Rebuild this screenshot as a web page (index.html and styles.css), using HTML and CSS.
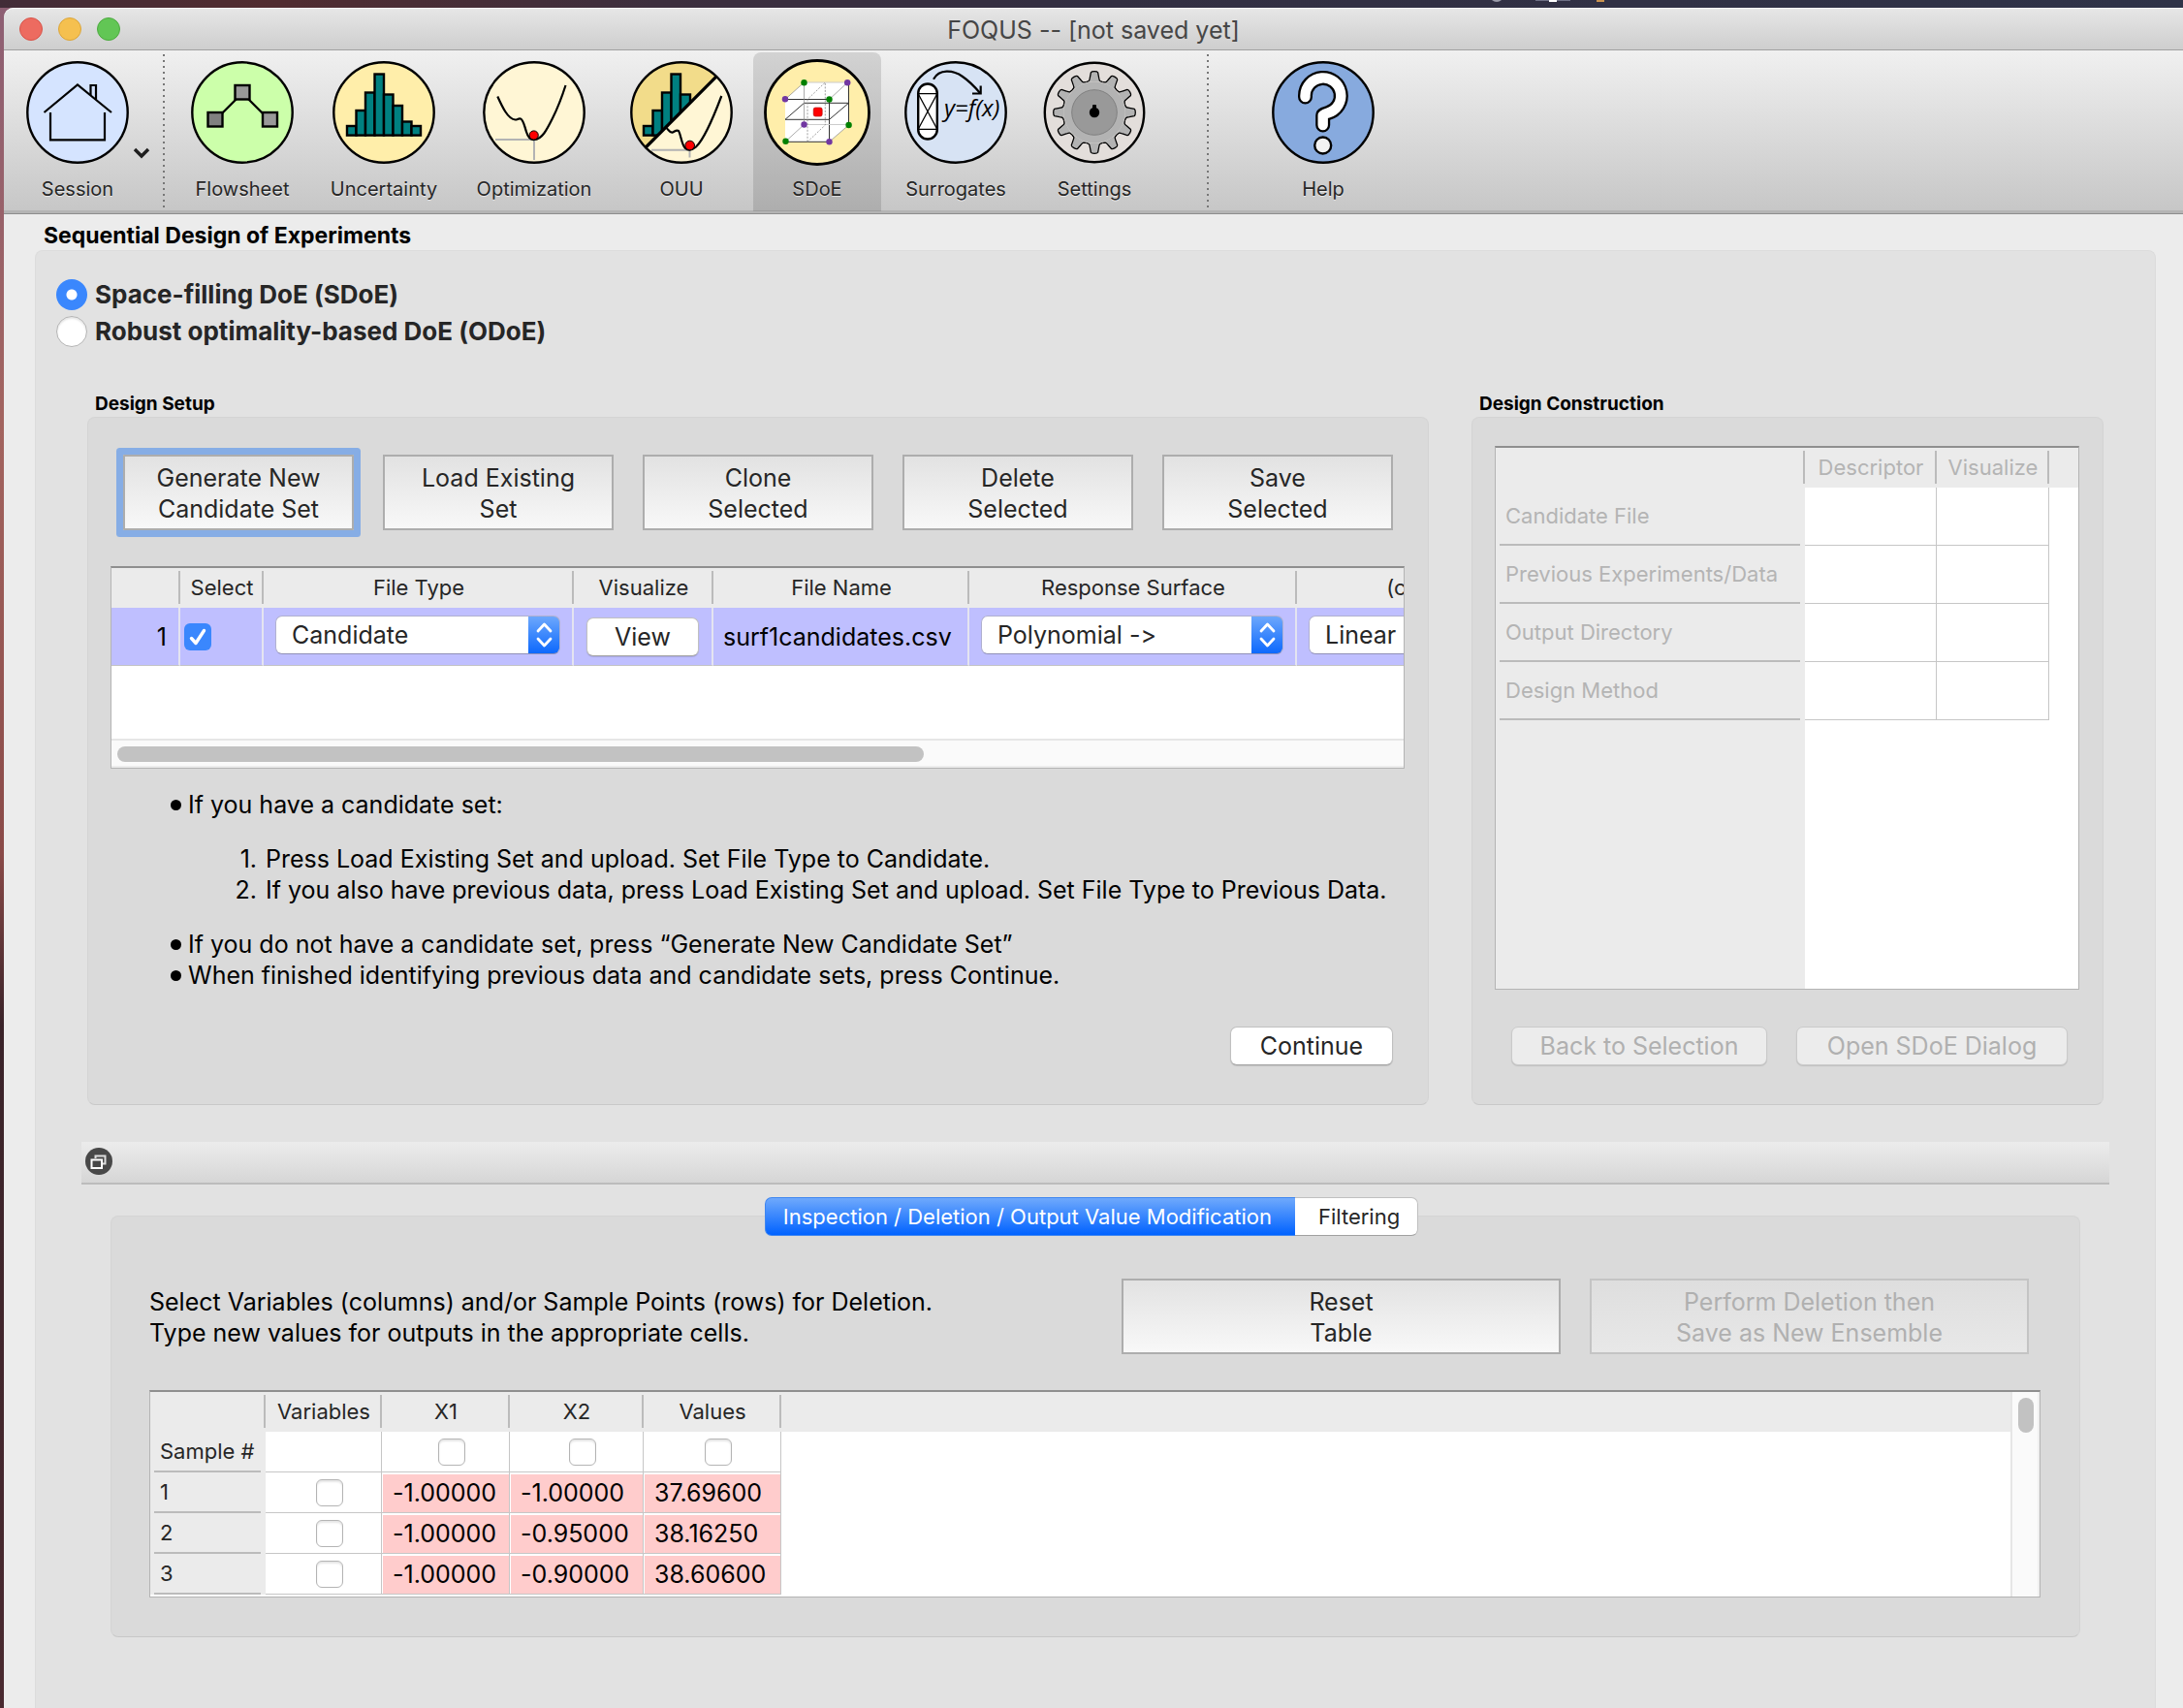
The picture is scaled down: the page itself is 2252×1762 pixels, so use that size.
FILE: index.html
```html
<!DOCTYPE html>
<html lang="en">
<head>
<meta charset="utf-8">
<title>FOQUS -- [not saved yet]</title>
<link rel="stylesheet" href="styles.css">
</head>
<body>
<div class="desktop-strip"></div>
<div class="window">
  <header class="titlebar">
    <div class="lights"><span class="light light-close"></span><span class="light light-min"></span><span class="light light-zoom"></span></div>
    <h1 class="window-title">FOQUS -- [not saved yet]</h1>
  </header>

  <nav class="toolbar" aria-label="Main">
    <button class="tool tool-session" type="button">
      <svg class="tool-icon" viewBox="0 0 106 106"><circle cx="53" cy="53" r="51.7" fill="#d5e4ff" stroke="#000" stroke-width="2.4"/><g fill="none" stroke="#000" stroke-width="2.2"><path d="M25 53V81.3H81V53"/><path d="M18.5 53L53 24.5L88 53"/><path d="M66.5 35V25H72V39.5"/></g></svg>
      <span class="tool-label">Session</span>
      <svg class="tool-arrow" viewBox="0 0 18 12"><path d="M2 2L9 9L16 2" fill="none" stroke="#1e1e1e" stroke-width="3.4"/></svg>
    </button>
    <span class="tool-sep"></span>
    <button class="tool tool-md" type="button">
      <svg class="tool-icon" viewBox="0 0 106 106"><circle cx="53" cy="53" r="51.7" fill="#ccffaa" stroke="#000" stroke-width="2.4"/><g stroke="#000" stroke-width="2.4"><path d="M47 39L32 54M59 39L74 54" fill="none"/><rect x="45.5" y="25" width="15" height="14.5" fill="#999"/><rect x="17.5" y="53" width="15" height="14.5" fill="#808080"/><rect x="74" y="53" width="15" height="14.5" fill="#999"/></g></svg>
      <span class="tool-label">Flowsheet</span>
    </button>
    <button class="tool tool-md" type="button">
      <svg class="tool-icon" viewBox="0 0 106 106"><circle cx="53" cy="53" r="51.7" fill="#ffeeaa" stroke="#000" stroke-width="2.4"/><g fill="#008080" stroke="#000" stroke-width="2.4"><rect x="15" y="67" width="9.5" height="9.6"/><rect x="24.5" y="51" width="9.5" height="25.6"/><rect x="34" y="32.5" width="9.5" height="44.1"/><rect x="43.5" y="13.5" width="9.5" height="63.1"/><rect x="53" y="34.5" width="9.5" height="42.1"/><rect x="62.5" y="46" width="9.5" height="30.6"/><rect x="72" y="62.5" width="9.5" height="14.1"/><rect x="81.5" y="67" width="9.5" height="9.6"/></g></svg>
      <span class="tool-label">Uncertainty</span>
    </button>
    <button class="tool tool-lg" type="button">
      <svg class="tool-icon" viewBox="0 0 106 106"><circle cx="53" cy="53" r="51.7" fill="#fff6d5" stroke="#000" stroke-width="2.4"/><path d="M13 81H53V102" fill="none" stroke="#b3b3b3" stroke-width="2"/><path d="M15.3 36.5C20 47 26 60 33.5 60.5C36 60.5 36.5 59 39 59.5C42 60.5 43 67 45 73C46.5 78 49 81.5 53 81C61 81 66 71 72 59C78 47 82 36 85.5 25" fill="none" stroke="#000" stroke-width="2.2"/><circle cx="52.7" cy="76.5" r="4.6" fill="#f00" stroke="#000" stroke-width="1"/></svg>
      <span class="tool-label">Optimization</span>
    </button>
    <button class="tool" type="button">
      <svg class="tool-icon" viewBox="0 0 106 106"><defs><clipPath id="upper-half"><path d="M0 0H104.7L0 105Z"/></clipPath></defs><circle cx="53" cy="53" r="51.7" fill="#fff6d5"/><g clip-path="url(#upper-half)"><circle cx="53" cy="53" r="51.7" fill="#f2dc8a"/><g fill="#008080" stroke="#000" stroke-width="2.4"><rect x="14" y="67" width="9.5" height="9.6"/><rect x="23.5" y="51" width="9.5" height="25.6"/><rect x="33" y="32.5" width="9.5" height="44.1"/><rect x="42.5" y="13.5" width="9.5" height="63.1"/><rect x="52" y="34.5" width="10" height="42.1"/></g></g><circle cx="53" cy="53" r="51.7" fill="none" stroke="#000" stroke-width="2.4"/><path d="M16.2 89L88.6 16.3" stroke="#000" stroke-width="3.2"/><path d="M22 91.8H61.5V99.5" fill="none" stroke="#b3b3b3" stroke-width="2"/><path d="M37.4 69C40 71 41 74.5 44 73.5C46 72.5 48 70.5 50 72C52.5 76 53 86 57 90C60 92.5 64 92 68 88.5C77 80 86 58 94.3 36" fill="none" stroke="#000" stroke-width="2.2"/><circle cx="61.7" cy="87" r="4.8" fill="#f00" stroke="#000" stroke-width="1"/></svg>
      <span class="tool-label">OUU</span>
    </button>
    <button class="tool tool-active" type="button" aria-pressed="true">
      <svg class="tool-icon" viewBox="0 0 110 110"><circle cx="55" cy="55" r="53.5" fill="#ffeeaa" stroke="#000" stroke-width="2.8"/><path d="M22 41.5L41.5 24H86.5L87.5 68L67.5 85.3H22Z" fill="#fff"/><g fill="none" stroke="#333" stroke-width="1"><path d="M22 41.5H67.5V85.3H22M87.5 24V68M22 62.3H67.5L87.5 45.3M22 62.3L41.5 45.3H87.5"/><path d="M22 41.5L41.5 24V67.5M67.5 41.5L86.5 24M67.5 85.3L87.5 68M22 85.3L41.5 67.5" stroke="#888" stroke-width=".7"/><path d="M41.5 67.5H87.5M41.5 24H86.5" stroke="#ccc"/><path d="M45 85.3V41.5L63.3 24V68L45 85.3" stroke="#888" stroke-width=".8" stroke-dasharray="2 1.5"/></g><rect x="51.2" y="50" width="9" height="9" rx="2" fill="#f00" stroke="#a00" stroke-width=".6"/><g fill="#008000"><circle cx="41.5" cy="24.3" r="3.2"/><circle cx="67.5" cy="41.5" r="3.2"/><circle cx="22.5" cy="84.7" r="3.2"/><circle cx="87.6" cy="68" r="3.2"/></g><g fill="#7137a1"><circle cx="86.2" cy="24.3" r="3.2"/><circle cx="22" cy="41.3" r="3.2"/><circle cx="41.5" cy="67.5" r="3.2"/><circle cx="67.5" cy="85.3" r="3.2"/></g></svg>
      <span class="tool-label">SDoE</span>
    </button>
    <button class="tool tool-md" type="button">
      <svg class="tool-icon" viewBox="0 0 106 106"><circle cx="53" cy="53" r="51.7" fill="#d7e3f4" stroke="#000" stroke-width="2.4"/><rect x="14.2" y="23.5" width="19.6" height="57" rx="9.8" fill="#fff" stroke="#000" stroke-width="2.4"/><path d="M14.2 33.7H33.8M14.2 70.3H33.8M14.2 33.7L33.8 70.3M33.8 33.7L14.2 70.3" stroke="#000" stroke-width="1.3"/><path d="M30 18.7C36 8 50 9 60 16C68 21.5 73 27 78 33" fill="none" stroke="#000" stroke-width="2.2"/><path d="M70 33.5H78.7V25.5" fill="none" stroke="#000" stroke-width="2.2"/><text class="icon-formula" x="41" y="57">y=f(x)</text></svg>
      <span class="tool-label">Surrogates</span>
    </button>
    <button class="tool" type="button">
      <svg class="tool-icon" viewBox="0 0 106 106"><defs><path id="tooth" d="M-8.4 -31.4L-5.8 -32.5Q-5 -33 -4.6 -36L-3.6 -41.2Q-3 -42.3 0 -42.3Q3 -42.3 3.6 -41.2L4.6 -36Q5 -33 5.8 -32.5L8.4 -31.4"/></defs><circle cx="53" cy="53" r="51.2" fill="#e3dedb" stroke="#000" stroke-width="2.4"/><g transform="translate(53 53)"><g fill="#b3b3b3" stroke="#000" stroke-width="1.3"><use href="#tooth"/><use href="#tooth" transform="rotate(30)"/><use href="#tooth" transform="rotate(60)"/><use href="#tooth" transform="rotate(90)"/><use href="#tooth" transform="rotate(120)"/><use href="#tooth" transform="rotate(150)"/><use href="#tooth" transform="rotate(180)"/><use href="#tooth" transform="rotate(210)"/><use href="#tooth" transform="rotate(240)"/><use href="#tooth" transform="rotate(270)"/><use href="#tooth" transform="rotate(300)"/><use href="#tooth" transform="rotate(330)"/></g><circle r="31.6" fill="#b3b3b3"/><circle r="23.3" fill="#999" stroke="#808080"/><circle r="5.2"/><rect x="-2" y="-8" width="4" height="5" rx="1"/></g></svg>
      <span class="tool-label">Settings</span>
    </button>
    <span class="tool-sep tool-sep-wide"></span>
    <button class="tool" type="button">
      <svg class="tool-icon" viewBox="0 0 106 106"><circle cx="53" cy="53" r="51.7" fill="#87aade" stroke="#000" stroke-width="2.4"/><g fill="none" stroke-linecap="round" stroke-linejoin="round"><path d="M34.5 37V35.5A18.4 18.4 0 1 1 58 53.5Q52.7 55 52.7 56V66" stroke="#000" stroke-width="15"/><path d="M34.5 37V35.5A18.4 18.4 0 1 1 58 53.5Q52.7 55 52.7 56V66" stroke="#fff" stroke-width="10.4"/></g><circle cx="52.7" cy="87" r="8.5" fill="#f2f2f2" stroke="#000" stroke-width="2.4"/></svg>
      <span class="tool-label">Help</span>
    </button>
  </nav>

  <main class="page">
    <h2 class="page-title">Sequential Design of Experiments</h2>
    <div class="page-panel">
      <div class="modes" role="radiogroup">
        <label class="mode"><input class="radio" type="radio" name="doe" checked>Space-filling DoE (SDoE)</label>
        <label class="mode"><input class="radio" type="radio" name="doe">Robust optimality-based DoE (ODoE)</label>
      </div>

      <div class="groups">
        <section class="group">
          <h3 class="group-title">Design Setup</h3>
          <div class="box">
            <div class="setup-actions">
              <button class="flat-btn flat-btn-focus" type="button">Generate New<br>Candidate Set</button>
              <button class="flat-btn" type="button">Load Existing<br>Set</button>
              <button class="flat-btn" type="button">Clone<br>Selected</button>
              <button class="flat-btn" type="button">Delete<br>Selected</button>
              <button class="flat-btn" type="button">Save<br>Selected</button>
            </div>
            <div class="sheet setup-sheet">
              <table class="grid setup-table">
                <colgroup><col class="c-num"><col class="c-select"><col class="c-type"><col class="c-vis"><col class="c-name"><col class="c-surface"><col class="c-cont"></colgroup>
                <thead><tr><th></th><th>Select</th><th>File Type</th><th>Visualize</th><th>File Name</th><th>Response Surface</th><th>(continued)</th></tr></thead>
                <tbody><tr>
                  <th class="row-num" scope="row">1</th>
                  <td class="cell-check"><input class="check" type="checkbox" checked aria-label="Select row 1"></td>
                  <td class="cell-combo"><select class="combo" aria-label="File type"><option>Candidate</option></select></td>
                  <td class="cell-view"><button class="push" type="button">View</button></td>
                  <td class="cell-name">surf1candidates.csv</td>
                  <td class="cell-combo"><select class="combo" aria-label="Response surface"><option>Polynomial -&gt;</option></select></td>
                  <td class="cell-combo"><select class="combo" aria-label="Response surface, continued"><option>Linear</option></select></td>
                </tr></tbody>
              </table>
              <div class="hscroll"><div class="hscroll-thumb"></div></div>
            </div>
            <ul class="help">
              <li>If you have a candidate set:
                <ol class="help-steps">
                  <li>Press Load Existing Set and upload. Set File Type to Candidate.</li>
                  <li>If you also have previous data, press Load Existing Set and upload. Set File Type to Previous Data.</li>
                </ol>
              </li>
              <li>If you do not have a candidate set, press “Generate New Candidate Set”</li>
              <li>When finished identifying previous data and candidate sets, press Continue.</li>
            </ul>
            <div class="box-foot foot-end"><button class="push push-continue" type="button">Continue</button></div>
          </div>
        </section>

        <section class="group">
          <h3 class="group-title">Design Construction</h3>
          <div class="box box-construct">
            <div class="sheet construct-sheet">
              <table class="grid construct-table">
                <colgroup><col class="c-label"><col class="c-desc"><col class="c-cvis"><col></colgroup>
                <thead><tr><th></th><th>Descriptor</th><th>Visualize</th><th></th></tr></thead>
                <tbody>
                  <tr><th scope="row"><span class="row-label">Candidate File</span></th><td></td><td></td></tr>
                  <tr><th scope="row"><span class="row-label">Previous Experiments/Data</span></th><td></td><td></td></tr>
                  <tr><th scope="row"><span class="row-label">Output Directory</span></th><td></td><td></td></tr>
                  <tr><th scope="row"><span class="row-label">Design Method</span></th><td></td><td></td></tr>
                </tbody>
              </table>
              <div class="construct-rest"></div>
            </div>
            <div class="box-foot foot-pair">
              <button class="push" type="button" disabled>Back to Selection</button>
              <button class="push" type="button" disabled>Open SDoE Dialog</button>
            </div>
          </div>
        </section>
      </div>

      <div class="dock">
        <button class="dock-btn" type="button" aria-label="Undock"><svg viewBox="0 0 28 28"><circle cx="14" cy="14" r="14" fill="#484848"/><path d="M10.500 11V8.500H20.500V16.500H18" fill="none" stroke="#ddd" stroke-width="2"/><rect x="6.500" y="12.500" width="10.500" height="8.500" fill="none" stroke="#fff" stroke-width="2"/></svg></button>
      </div>

      <section class="analysis">
        <div class="tabs" role="tablist">
          <button class="tab tab-on" type="button" role="tab" aria-selected="true">Inspection / Deletion / Output Value Modification</button>
          <button class="tab" type="button" role="tab" aria-selected="false">Filtering</button>
        </div>
        <div class="box box-analysis">
          <div class="analysis-top">
            <p class="analysis-note">Select Variables (columns) and/or Sample Points (rows) for Deletion.<br>Type new values for outputs in the appropriate cells.</p>
            <button class="flat-btn" type="button">Reset<br>Table</button>
            <button class="flat-btn" type="button" disabled>Perform Deletion then<br>Save as New Ensemble</button>
          </div>
          <div class="sheet sample-sheet">
            <div class="sample-view">
              <table class="grid sample-table">
                <colgroup><col class="c-sample"><col class="c-vars"><col class="c-x1"><col class="c-x2"><col class="c-values"><col></colgroup>
                <thead><tr><th></th><th>Variables</th><th>X1</th><th>X2</th><th>Values</th><th></th></tr></thead>
                <tbody>
                  <tr><th scope="row"><span class="row-label">Sample #</span></th><td></td><td class="cell-box"><input class="check" type="checkbox" aria-label="X1"></td><td class="cell-box"><input class="check" type="checkbox" aria-label="X2"></td><td class="cell-box"><input class="check" type="checkbox" aria-label="Values"></td></tr>
                  <tr><th scope="row"><span class="row-label">1</span></th><td class="cell-box"><input class="check" type="checkbox" aria-label="Sample 1"></td><td class="pink">-1.00000</td><td class="pink">-1.00000</td><td class="pink">37.69600</td></tr>
                  <tr><th scope="row"><span class="row-label">2</span></th><td class="cell-box"><input class="check" type="checkbox" aria-label="Sample 2"></td><td class="pink">-1.00000</td><td class="pink">-0.95000</td><td class="pink">38.16250</td></tr>
                  <tr><th scope="row"><span class="row-label">3</span></th><td class="cell-box"><input class="check" type="checkbox" aria-label="Sample 3"></td><td class="pink">-1.00000</td><td class="pink">-0.90000</td><td class="pink">38.60600</td></tr>
                </tbody>
              </table>
            </div>
            <div class="vscroll"><div class="vscroll-thumb"></div></div>
          </div>
        </div>
      </section>
    </div>
  </main>
</div>
</body>
</html>
```
FILE: styles.css
```css
* { box-sizing: border-box; }

body {
  margin: 0;
  min-height: 100vh;
  display: flex;
  flex-direction: column;
  background: linear-gradient(#8d5f74, #a3645f 25%, #8a4a48 50%, #3a2329 60%, #4a2a30);
  font-family: Inter, "Liberation Sans", sans-serif;
  font-size: 25px;
  line-height: 32px;
  font-variant-ligatures: no-contextual;
  color: #000;
}

h1, h2, h3, p, ul, ol { margin: 0; padding: 0; }

button, select {
  font: inherit;
  font-variant-ligatures: no-contextual;
  color: #262626;
  margin: 0;
}

/* Desktop showing above the window */
.desktop-strip {
  height: 8px;
  background:
    radial-gradient(circle, #9c9dab 60%, transparent 70%) 1536px -12px / 16px 14px no-repeat,
    linear-gradient(#fff, #fff) 1598px 0 / 8px 2px no-repeat,
    linear-gradient(#6e7086, #6e7086) 1584px 0 / 36px 1px no-repeat,
    linear-gradient(#c9924f, #c9924f) 1647px 0 / 8px 2px no-repeat,
    linear-gradient(90deg, #422c38, #512c30 12%, #3d2f3e 30%, #332f42 50%, #2f3348);
}

.window {
  flex: 1;
  display: flex;
  flex-direction: column;
  margin-left: 4px;
  background: #ececec;
  border-top-left-radius: 10px;
}

/* Title bar */
.titlebar {
  position: relative;
  height: 44px;
  display: flex;
  align-items: center;
  justify-content: center;
  background: linear-gradient(#e6e6e6, #cecece);
  border-top: 1px solid #f6f6f6;
  border-bottom: 1px solid #a0a0a0;
  border-top-left-radius: 10px;
}

.lights {
  position: absolute;
  left: 16px;
  display: flex;
  gap: 16px;
}

.light {
  width: 24px;
  height: 24px;
  border-radius: 50%;
  border: 1px solid;
}

.light-close { background: #ed6b60; border-color: #d8544a; }
.light-min { background: #f5c04f; border-color: #dba53a; }
.light-zoom { background: #62c655; border-color: #4caa3f; }

.window-title {
  padding-top: 2px;
  font-size: 25px;
  font-weight: 400;
  color: #464646;
}

/* Toolbar */
.toolbar {
  display: flex;
  gap: 8px;
  height: 169px;
  padding: 2px 0 0 10px;
  background: linear-gradient(#f0f0f0, #c6c6c6);
  border-bottom: 1px solid #8c8c8c;
  box-shadow: inset 0 -3px #b4b4b4;
}

.tool {
  position: relative;
  width: 132px;
  height: 164px;
  padding: 9px 0 0;
  display: flex;
  flex-direction: column;
  align-items: center;
  gap: 14px;
  background: none;
  border: 0;
}

.tool-session { margin-right: 14px; }
.tool-md { width: 138px; }
.tool-lg { width: 156px; }

.tool-active {
  background: rgba(0, 0, 0, .12);
  border-radius: 8px 8px 0 0;
  padding-top: 7px;
  gap: 12px;
}

.tool-icon { width: 106px; height: 106px; flex: none; }
.tool-active .tool-icon { width: 110px; height: 110px; }

.tool-label {
  font-size: 20px;
  line-height: 24px;
  color: #262626;
  text-shadow: 0 1px 0 rgba(255, 255, 255, .6);
}

.tool-arrow {
  position: absolute;
  left: 123px;
  top: 98px;
  width: 18px;
  height: 12px;
}

.tool-sep {
  width: 2px;
  height: 158px;
  margin: 2px 3px 2px 0;
  background: repeating-linear-gradient(#777 0 2px, transparent 2px 6px);
}

.tool-sep-wide { margin: 2px 44px 2px 42px; }

.icon-formula {
  font-family: "Open Sans", "Liberation Sans", sans-serif;
  font-style: italic;
  font-size: 24px;
}

/* Page */
.page {
  flex: 1;
  display: flex;
  flex-direction: column;
  padding: 8px 28px 0 32px;
}

.page-title {
  padding-left: 9px;
  font-size: 23px;
  line-height: 29px;
  font-weight: 700;
}

.page-panel {
  flex: 1;
  padding: 26px 53px 74px;
  background: #e2e2e2;
  border: 1px solid #dcdcdc;
  border-bottom: 0;
  border-radius: 8px 8px 0 0;
}

.modes { margin-left: -32px; }

.mode {
  display: flex;
  align-items: center;
  gap: 8px;
  height: 38px;
  font-size: 26px;
  font-weight: 700;
  color: #262626;
}

.radio, .check {
  appearance: none;
  flex: none;
  margin: 0;
  background: #fff;
  border: 1px solid #b4b4b4;
  box-shadow: inset 0 2px 2px rgba(0, 0, 0, .1);
}

.radio {
  width: 32px;
  height: 32px;
  border-radius: 50%;
}

.radio:checked {
  border: 0;
  background: radial-gradient(circle, #fff 5px, #3a87fd 6px);
  box-shadow: none;
}

.check {
  width: 28px;
  height: 28px;
  border-radius: 6px;
}

.check:checked {
  border: 0;
  box-shadow: none;
  background: #3a87fd url("data:image/svg+xml,%3Csvg xmlns='http://www.w3.org/2000/svg' viewBox='0 0 28 28'%3E%3Cpath d='M7.500 15.500L12 20.500L20.500 7.500' fill='none' stroke='%23fff' stroke-width='3.400' stroke-linecap='round' stroke-linejoin='round'/%3E%3C/svg%3E");
}

.groups {
  display: grid;
  grid-template-columns: 1384fr 652fr;
  gap: 44px;
  margin-top: 43px;
}

.group {
  display: flex;
  flex-direction: column;
  min-width: 0;
}

.group-title {
  padding: 1px 0 1px 8px;
  font-size: 19px;
  line-height: 24px;
  font-weight: 700;
}

.box {
  flex: 1;
  display: flex;
  flex-direction: column;
  padding: 38px 24px 40px 23px;
  background: #dadada;
  border: 1px solid #d4d4d4;
  border-bottom-color: #c8c8c8;
  border-radius: 8px;
}

.box-construct { padding-top: 29px; }

/* Buttons */
.flat-btn {
  flex: 1;
  height: 78px;
  padding: 2px 0 0;
  background: linear-gradient(#e2e2e2, #f8f8f8);
  border: 2px solid #adadad;
}

.flat-btn-focus {
  box-shadow: 0 0 0 7px #86ade5;
  border-radius: 1px;
}

.flat-btn:disabled {
  color: #b0b0b0;
  background: linear-gradient(#dedede, #e8e8e8);
  border-color: #c4c4c4;
}

.push {
  height: 40px;
  padding: 0;
  line-height: 38px;
  background: #fff;
  border: 1px solid #c0c0c0;
  border-bottom-color: #a4a4a4;
  border-radius: 7px;
  box-shadow: 0 1px 1px rgba(0, 0, 0, .12);
}

.push:disabled {
  color: #b0b0b0;
  background: #ececec;
  border-color: #cacaca;
}

.push-continue { width: 168px; }

.setup-actions {
  display: flex;
  gap: 30px;
  margin: 0 12px 37px 13px;
}

.box-foot { margin-top: 38px; }
.help + .box-foot { margin-top: 37px; }

.foot-end {
  display: flex;
  justify-content: flex-end;
  padding-right: 12px;
}

.foot-pair {
  display: grid;
  grid-template-columns: 264fr 280fr;
  gap: 30px;
  padding: 0 12px 0 17px;
}

/* Tables */
.sheet {
  background: #fff;
  border: 1px solid #b4b4b4;
  border-top: 2px solid #8f8f8f;
  overflow: hidden;
}

.grid {
  table-layout: fixed;
  border-collapse: separate;
  border-spacing: 0;
}

.grid th, .grid td { padding: 0; font-weight: 400; }

.grid thead th {
  height: 41px;
  padding-bottom: 2px;
  font-size: 22px;
  line-height: 28px;
  color: #262626;
  background: linear-gradient(#bbb, #bbb) right 3px / 2px 34px no-repeat #ebebeb;
}

.grid thead th:last-child { background: #ebebeb; }

.setup-sheet {
  height: 209px;
  display: flex;
  flex-direction: column;
}

.setup-table { width: 1527px; flex: none; }
.c-num { width: 71px; }
.c-select { width: 86px; }
.c-type { width: 320px; }
.c-vis { width: 144px; }
.c-name { width: 264px; }
.c-surface { width: 338px; }
.c-cont { width: 304px; }

.setup-table tbody th, .setup-table tbody td {
  height: 60px;
  background: #bfbfff;
  border-right: 2px solid #e4e4f0;
  border-bottom: 1px solid #c4c4c4;
}

.setup-table .row-num { text-align: right; padding-right: 12px; }
.setup-table .cell-check { padding-left: 4px; }
.cell-check .check { display: block; }
.setup-table .cell-view { padding: 0 13px; }
.cell-view .push { display: block; width: 100%; }
.setup-table .cell-name { padding-left: 10px; white-space: nowrap; }
.setup-table .cell-combo { padding: 0 12px 3px; }

.combo {
  appearance: none;
  display: block;
  width: 100%;
  height: 40px;
  padding: 0 40px 0 16px;
  line-height: 36px;
  border: 1px solid #b0b0d0;
  border-bottom-color: #9090b8;
  border-radius: 7px;
  background:
    url("data:image/svg+xml,%3Csvg xmlns='http://www.w3.org/2000/svg' viewBox='0 0 33 40'%3E%3Cpath d='M10 16L16.500 9L23 16M10 24L16.500 31L23 24' fill='none' stroke='%23fff' stroke-width='2.800' stroke-linecap='round' stroke-linejoin='round'/%3E%3C/svg%3E") right center / 33px 40px no-repeat border-box,
    linear-gradient(#6fa9fc, #0a67fd) right / 33px 100% no-repeat border-box,
    #fff;
}

.hscroll {
  margin-top: auto;
  height: 30px;
  padding: 6px;
  background: #fafafa;
  border-top: 2px solid #e6e6e6;
  border-bottom: 2px solid #ececec;
}

.hscroll-thumb {
  width: 63%;
  height: 16px;
  border-radius: 8px;
  background: #c2c2c2;
}

/* Help list */
.help {
  margin-top: 21px;
  list-style: none;
}

.help > li { padding-left: 80px; position: relative; }

.help > li::before {
  content: "";
  position: absolute;
  left: 62px;
  top: 11px;
  width: 11px;
  height: 11px;
  border-radius: 50%;
  background: #000;
}

.help-steps {
  margin: 24px -20px 24px 0;
  list-style: none;
  counter-reset: step;
}

.help-steps li {
  display: flex;
  gap: 9px;
  white-space: nowrap;
  counter-increment: step;
}

.help-steps li::before {
  content: counter(step) ".";
  width: 71px;
  text-align: right;
}

/* Design construction */
.construct-sheet {
  flex: 1;
  display: flex;
  flex-direction: column;
}

.construct-table { width: 100%; }
.c-label { width: 319px; }
.c-desc { width: 136px; }
.c-cvis { width: 116px; }

.construct-table thead th { color: #b4b4b4; }

.construct-table tbody th, .sample-table tbody th {
  padding: 0 5px 0 4px;
  background: #ebebeb;
  text-align: left;
  font-size: 22px;
}

.row-label {
  display: block;
  padding-left: 6px;
  border-bottom: 2px solid #bbb;
}

.construct-table .row-label {
  line-height: 58px;
  color: #b4b4b4;
}

.construct-table tbody td, .sample-table tbody td {
  border-right: 1px solid #c6c6c6;
  border-bottom: 1px solid #c6c6c6;
}

.construct-rest {
  flex: 1;
  width: 319px;
  background: #ebebeb;
}

/* Dock title */
.dock {
  height: 44px;
  margin: 38px -6px 0;
  padding: 6px 4px;
  background: linear-gradient(#ececec, #d6d6d6);
  border-bottom: 2px solid #bcbcbc;
}

.dock-btn {
  display: block;
  width: 28px;
  height: 28px;
  padding: 0;
  background: none;
  border: 0;
}

.dock-btn svg { display: block; }

/* Analysis */
.analysis { margin: 13px 24px 0; }

.tabs {
  position: relative;
  display: flex;
  justify-content: center;
  margin: 0 8px -21px 0;
}

.tab {
  height: 40px;
  padding: 0 18px 0 24px;
  font-size: 22px;
  line-height: 38px;
  background: #fff;
  border: 1px solid #c0c0c0;
  border-bottom-color: #a0a0a0;
  border-left: 0;
  border-radius: 0 7px 7px 0;
}

.tab-on {
  padding: 0 24px 0 18px;
  color: #fff;
  background: linear-gradient(#6fa9fc, #0062ff);
  border: 1px solid #3f86f0;
  border-right: 0;
  border-radius: 7px 0 0 7px;
}

.box-analysis { padding: 64px 40px 40px 39px; }

.analysis-top {
  display: flex;
  align-items: center;
  gap: 30px;
  padding-right: 12px;
  margin-bottom: 37px;
}

.analysis-note {
  flex: 0 0 973px;
  padding-top: 2px;
}

.sample-sheet { display: flex; }
.sample-view { flex: 1; padding-bottom: 2px; }
.sample-table { width: 100%; }
.c-sample { width: 119px; }
.c-vars { width: 120px; }
.c-x1 { width: 132px; }
.c-x2 { width: 138px; }
.c-values { width: 142px; }

.sample-table .row-label {
  line-height: 40px;
  color: #262626;
}

.sample-table .cell-box { padding-left: 12px; text-align: center; }
.cell-box .check { display: block; margin: 0 auto; }

.sample-table .pink {
  padding-left: 11px;
  background: #ffcccc;
  box-shadow: inset 1px 2px #fff;
}

.vscroll {
  width: 30px;
  padding: 6px 6px;
  background: #fafafa;
  border-left: 2px solid #e6e6e6;
  border-right: 2px solid #f0f0f0;
}

.vscroll-thumb {
  width: 16px;
  height: 36px;
  border-radius: 8px;
  background: #c2c2c2;
}
```
